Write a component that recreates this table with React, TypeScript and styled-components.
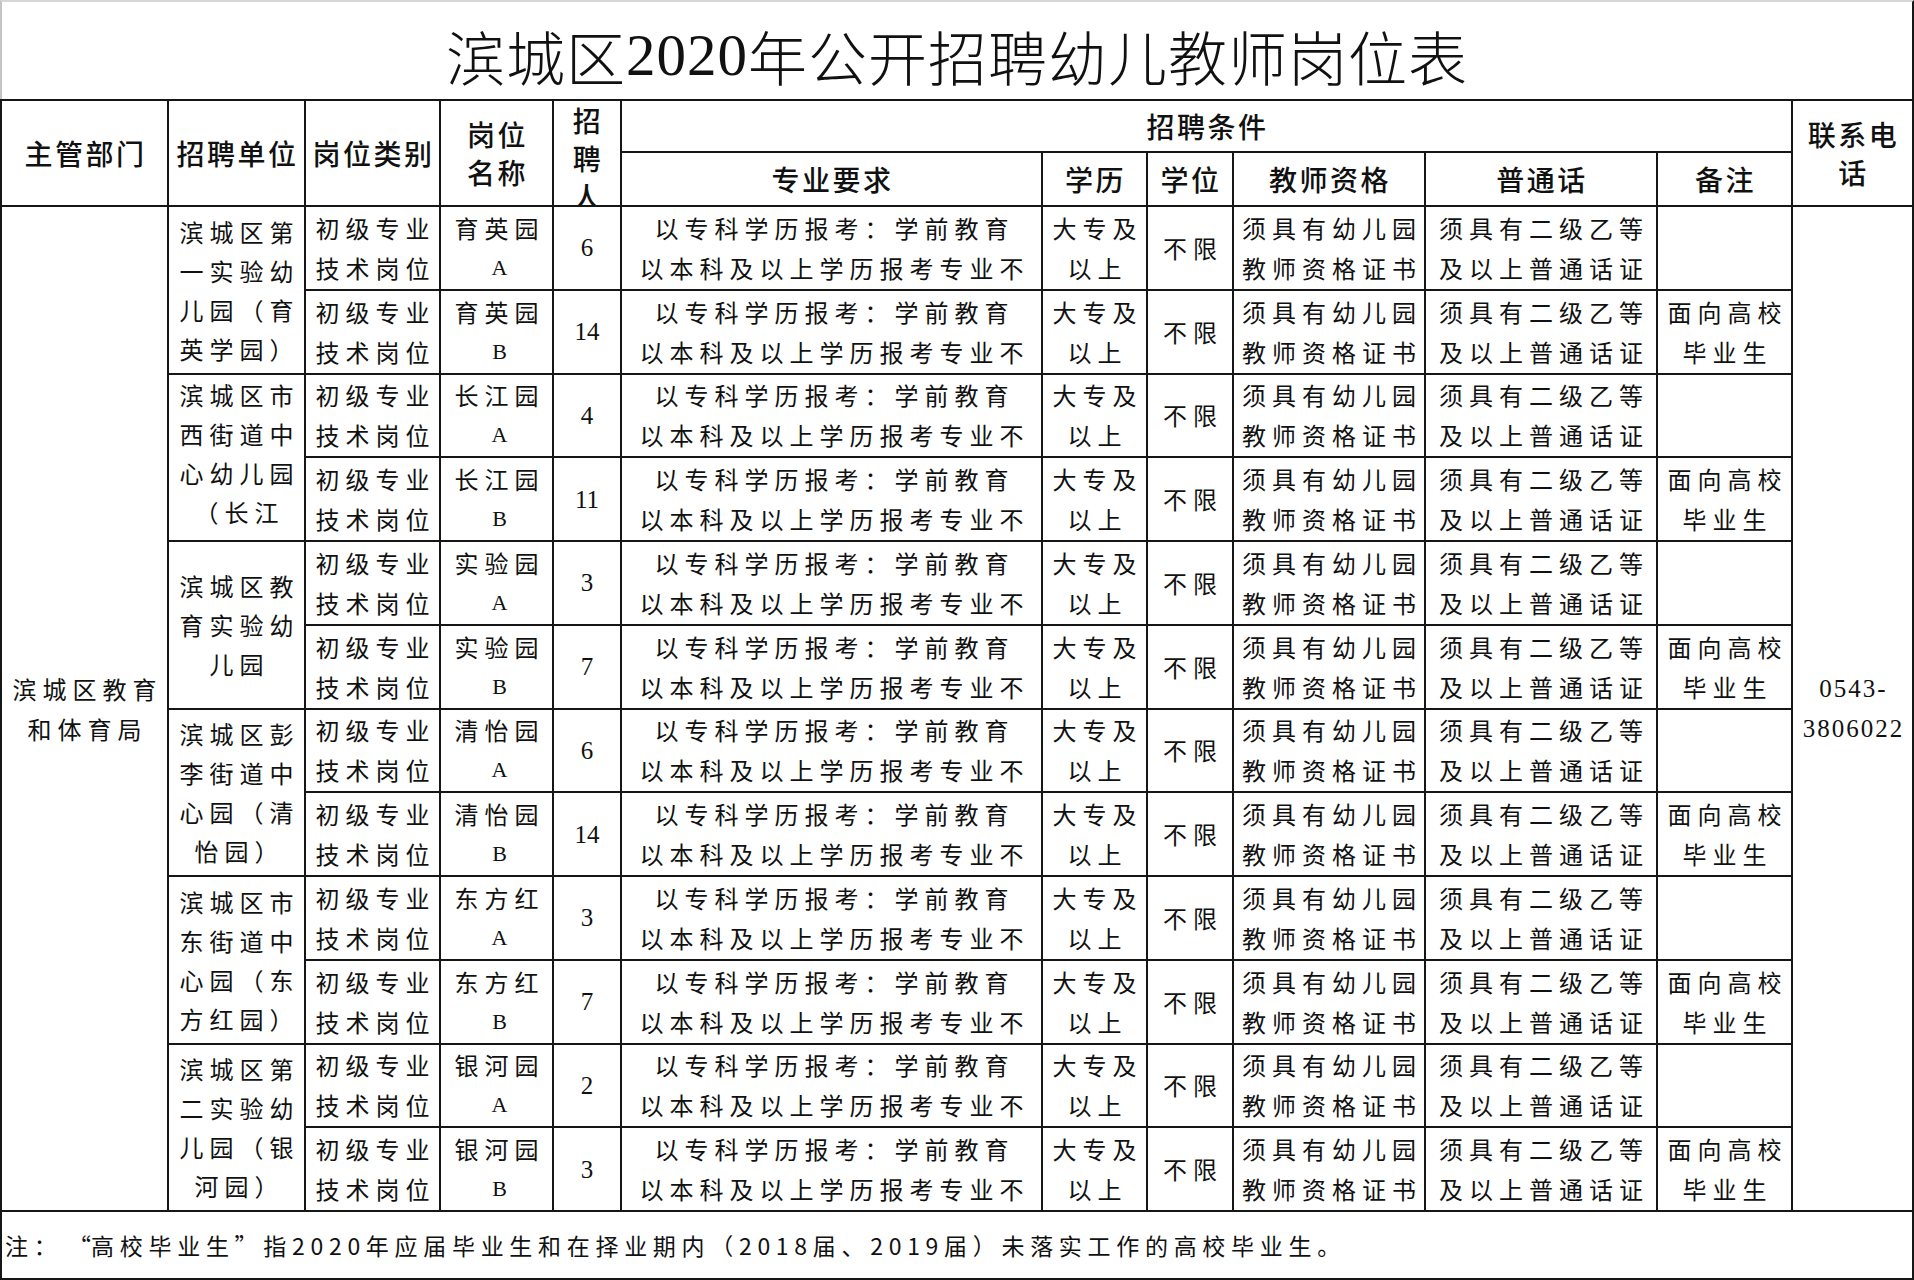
import React from "react";
import styled, { createGlobalStyle } from "styled-components";

const GlobalStyle = createGlobalStyle`
  html, body {
    margin: 0;
    padding: 0;
    background: #ffffff;
    font-family: "Noto Sans CJK SC", sans-serif;
  }
`;

const Page = styled.div`
  width: 1914px;
  height: 1280px;
  box-sizing: border-box;
  background: #ffffff;
`;

const TitleBar = styled.header`
  box-sizing: border-box;
  height: 99px;
  border-top: 2px solid #d6d6d6;
  border-left: 2px solid #c4c4c4;
  border-right: 2px solid #161616;
  display: flex;
  align-items: center;
  justify-content: center;
  padding-top: 10px;
  font: 300 59px/1 "Noto Sans CJK SC", serif;
  letter-spacing: 1px;
  color: #111;
`;

const SerifDigits = styled.span`
  font-family: "Liberation Serif", serif;
  font-weight: 400;
`;

const Sheet = styled.div`
  display: grid;
  grid-template-columns: 165px 135px 133px 111px 66px 419px 103px 84px 190px 230px 133px 119px;
  grid-template-rows: 50px 52px repeat(12, 81.75px) 66px;
  gap: 2px;
  padding: 2px;
  background: #161616;
`;

interface PlaceProps {
  $col: string;
  $row: string;
}

const Cell = styled.div<PlaceProps>`
  grid-column: ${(p) => p.$col};
  grid-row: ${(p) => p.$row};
  background: #ffffff;
  color: #111;
  display: flex;
  flex-direction: column;
  justify-content: safe center;
  align-items: center;
  text-align: center;
  white-space: nowrap;
  overflow: hidden;
`;

const HeadCell = styled(Cell)`
  font: 500 28px/38px "Noto Sans CJK SC", sans-serif;
  letter-spacing: 2.5px;
  padding-left: 2px;
`;

const BodyCell = styled(Cell)`
  font: 400 24px/40px "Noto Sans CJK SC", sans-serif;
  letter-spacing: 6px;
  padding-left: 6px;
`;

// 招聘单位: long names wrap to four or five lines and get cut at the cell edge
const UnitCell = styled(BodyCell)`
  line-height: 39px;
`;

const Latin = styled.span`
  font-family: "Liberation Serif", serif;
  font-size: 22px;
  letter-spacing: 0;
`;

const CountCell = styled(Cell)`
  font: 400 25px/1 "Liberation Serif", serif;
`;

const PhoneCell = styled(Cell)`
  font: 400 25px/40px "Liberation Serif", serif;
  letter-spacing: 2px;
  padding-left: 2px;
`;

const NoteCell = styled(Cell)`
  align-items: flex-start;
  padding: 0 0 0 3px;
  font: 400 23px/1 "Noto Sans CJK SC", sans-serif;
  letter-spacing: 5.7px;
`;

const Quote = styled.span<{ $open?: boolean }>`
  display: inline-block;
  width: 28.7px;
  letter-spacing: 0;
  text-align: ${(p) => (p.$open ? "right" : "left")};
`;

interface Post {
  name: string;
  code: string;
  count: number;
}

interface Unit {
  lines: string[];
  posts: Post[];
}

const units: Unit[] = [
  {
    lines: ["滨城区第", "一实验幼", "儿园（育", "英学园）"],
    posts: [
      { name: "育英园", code: "A", count: 6 },
      { name: "育英园", code: "B", count: 14 },
    ],
  },
  {
    lines: ["滨城区市", "西街道中", "心幼儿园", "（长江", "园）"],
    posts: [
      { name: "长江园", code: "A", count: 4 },
      { name: "长江园", code: "B", count: 11 },
    ],
  },
  {
    lines: ["滨城区教", "育实验幼", "儿园"],
    posts: [
      { name: "实验园", code: "A", count: 3 },
      { name: "实验园", code: "B", count: 7 },
    ],
  },
  {
    lines: ["滨城区彭", "李街道中", "心园（清", "怡园）"],
    posts: [
      { name: "清怡园", code: "A", count: 6 },
      { name: "清怡园", code: "B", count: 14 },
    ],
  },
  {
    lines: ["滨城区市", "东街道中", "心园（东", "方红园）"],
    posts: [
      { name: "东方红", code: "A", count: 3 },
      { name: "东方红", code: "B", count: 7 },
    ],
  },
  {
    lines: ["滨城区第", "二实验幼", "儿园（银", "河园）"],
    posts: [
      { name: "银河园", code: "A", count: 2 },
      { name: "银河园", code: "B", count: 3 },
    ],
  },
];

const Lines = ({ lines }: { lines: string[] }) => (
  <>
    {lines.map((l, i) => (
      <span key={i}>{l}</span>
    ))}
  </>
);

const App = () => {
  const firstRow = 3;
  const lastRow = firstRow + units.length * 2;

  return (
    <Page>
      <GlobalStyle />
      <TitleBar>
        滨城区<SerifDigits>2020</SerifDigits>年公开招聘幼儿教师岗位表
      </TitleBar>
      <Sheet>
        <HeadCell $col="1" $row="1 / 3">主管部门</HeadCell>
        <HeadCell $col="2" $row="1 / 3">招聘单位</HeadCell>
        <HeadCell $col="3" $row="1 / 3">岗位类别</HeadCell>
        <HeadCell $col="4" $row="1 / 3">
          <Lines lines={["岗位", "名称"]} />
        </HeadCell>
        <HeadCell $col="5" $row="1 / 3">
          <Lines lines={["招", "聘", "人"]} />
        </HeadCell>
        <HeadCell $col="6 / 12" $row="1">招聘条件</HeadCell>
        <HeadCell $col="6" $row="2">专业要求</HeadCell>
        <HeadCell $col="7" $row="2">学历</HeadCell>
        <HeadCell $col="8" $row="2">学位</HeadCell>
        <HeadCell $col="9" $row="2">教师资格</HeadCell>
        <HeadCell $col="10" $row="2">普通话</HeadCell>
        <HeadCell $col="11" $row="2">备注</HeadCell>
        <HeadCell $col="12" $row="1 / 3">
          <Lines lines={["联系电", "话"]} />
        </HeadCell>

        <BodyCell $col="1" $row={`${firstRow} / ${lastRow}`}>
          <Lines lines={["滨城区教育", "和体育局"]} />
        </BodyCell>

        {units.map((unit, u) => {
          const top = firstRow + u * 2;
          return (
            <React.Fragment key={u}>
              <UnitCell $col="2" $row={`${top} / ${top + 2}`}>
                <Lines lines={unit.lines} />
              </UnitCell>
              {unit.posts.map((post, p) => {
                const row = String(top + p);
                return (
                  <React.Fragment key={p}>
                    <BodyCell $col="3" $row={row}>
                      <Lines lines={["初级专业", "技术岗位"]} />
                    </BodyCell>
                    <BodyCell $col="4" $row={row}>
                      <span>{post.name}</span>
                      <Latin>{post.code}</Latin>
                    </BodyCell>
                    <CountCell $col="5" $row={row}>
                      {post.count}
                    </CountCell>
                    <BodyCell $col="6" $row={row}>
                      <Lines
                        lines={["以专科学历报考：学前教育", "以本科及以上学历报考专业不"]}
                      />
                    </BodyCell>
                    <BodyCell $col="7" $row={row}>
                      <Lines lines={["大专及", "以上"]} />
                    </BodyCell>
                    <BodyCell $col="8" $row={row}>
                      不限
                    </BodyCell>
                    <BodyCell $col="9" $row={row}>
                      <Lines lines={["须具有幼儿园", "教师资格证书"]} />
                    </BodyCell>
                    <BodyCell $col="10" $row={row}>
                      <Lines lines={["须具有二级乙等", "及以上普通话证"]} />
                    </BodyCell>
                    <BodyCell $col="11" $row={row}>
                      {post.code === "B" && <Lines lines={["面向高校", "毕业生"]} />}
                    </BodyCell>
                  </React.Fragment>
                );
              })}
            </React.Fragment>
          );
        })}

        <PhoneCell $col="12" $row={`${firstRow} / ${lastRow}`}>
          <Lines lines={["0543-", "3806022"]} />
        </PhoneCell>

        <NoteCell $col="1 / -1" $row={String(lastRow)}>
          <span>
            注：<Quote $open>“</Quote>高校毕业生<Quote>”</Quote>指2020年应届毕业生和在择业期内（2018届、2019届）未落实工作的高校毕业生。
          </span>
        </NoteCell>
      </Sheet>
    </Page>
  );
};

export default App;
